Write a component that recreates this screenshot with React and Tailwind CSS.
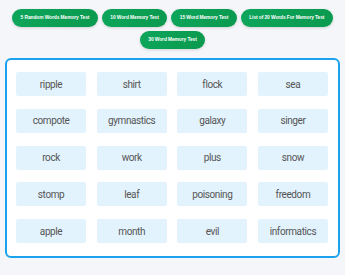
import React from "react";

const tests = [
  "5 Random Words Memory Test",
  "10 Word Memory Test",
  "15 Word Memory Test",
  "List of 20 Words For Memory Test",
  "30 Word Memory Test",
];

const words = [
  "ripple", "shirt", "flock", "sea",
  "compote", "gymnastics", "galaxy", "singer",
  "rock", "work", "plus", "snow",
  "stomp", "leaf", "poisoning", "freedom",
  "apple", "month", "evil", "informatics",
];

export default function App() {
  return (
    <main className="w-[345px] h-[275px] bg-[#f4f6f9] overflow-hidden" style={{ fontFamily: "'Liberation Sans', Arial, sans-serif" }}>
      {/* Test selector buttons */}
      <div className="flex flex-wrap justify-center gap-x-[4px] gap-y-[4px] pt-[9px] px-[8px]">
        {tests.map((t) => (
          <button
            key={t}
            className="h-[18px] px-[8.5px] rounded-full bg-gradient-to-r from-[#0ca55a] to-[#0b9a4f] text-white text-[4.9px] font-bold tracking-[-0.1px] shadow-[0_1px_3px_rgba(0,0,0,0.15)] whitespace-nowrap"
          >
            {t}
          </button>
        ))}
      </div>

      {/* Word grid */}
      <div className="mx-[5px] mt-[9px] border-2 border-[#1aa3ec] rounded-[6px] bg-white pt-[12px] pb-[13px] pl-[9px] pr-[10px] grid grid-cols-4 gap-x-[10.5px] gap-y-[12.75px]">
        {words.map((w) => (
          <div
            key={w}
            className="h-[24px] bg-[#e3f3fd] rounded-[2px] flex items-center justify-center text-[10px] text-[#555] tracking-[-0.4px]"
            style={{ fontFamily: "Roboto, 'Liberation Sans', sans-serif" }}
          >
            {w}
          </div>
        ))}
      </div>
    </main>
  );
}
